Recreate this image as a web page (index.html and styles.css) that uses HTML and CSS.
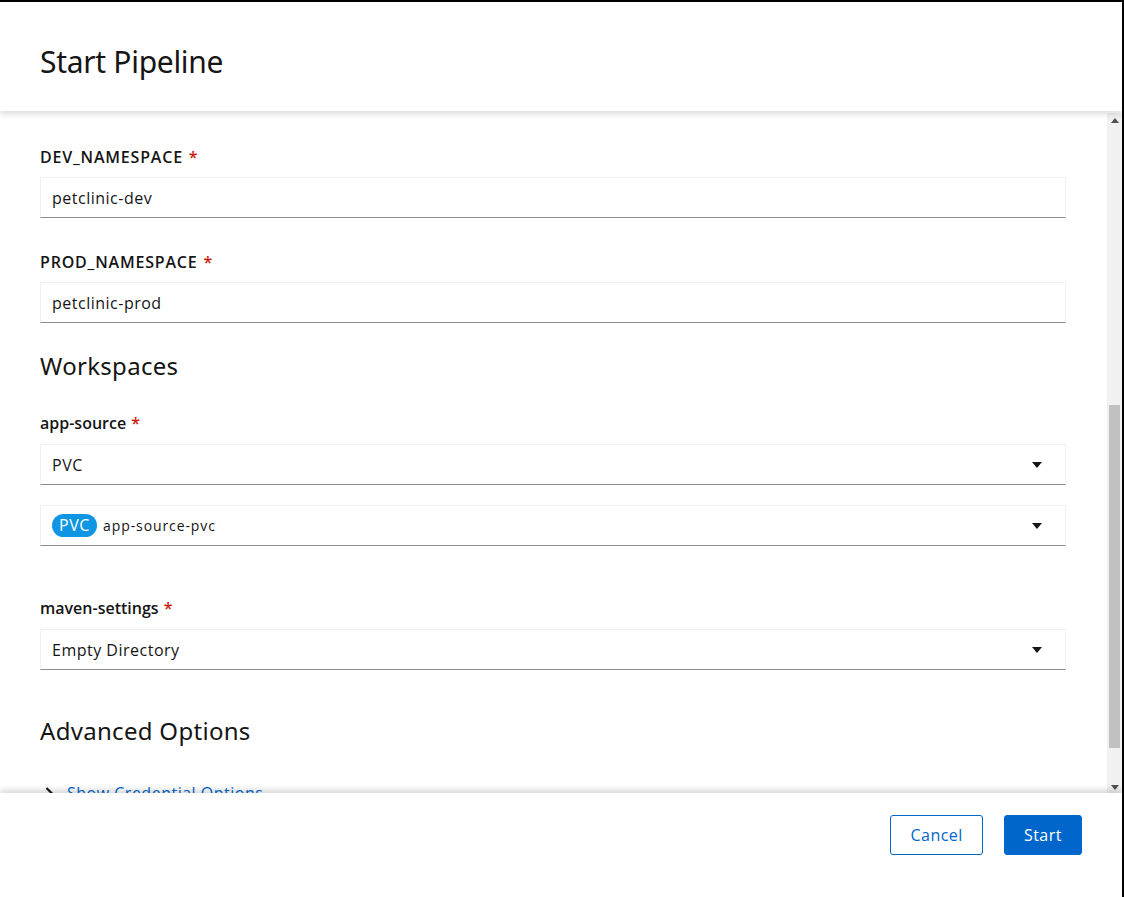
FILE: index.html
```html
<!DOCTYPE html>
<html>
<head>
<meta charset="utf-8">
<link rel="stylesheet" href="styles.css">
</head>
<body>
<div class="modal">
  <header class="modal-header">
    <h1 class="title">Start Pipeline</h1>
  </header>
  <div class="modal-body">
    <div class="content">
      <label class="label caps">DEV_NAMESPACE <span class="req">*</span></label>
      <div class="input">petclinic-dev</div>
      <label class="label caps l-prod">PROD_NAMESPACE <span class="req">*</span></label>
      <div class="input">petclinic-prod</div>
      <h2 class="section ws">Workspaces</h2>
      <label class="label">app-source <span class="req">*</span></label>
      <div class="input select"><span>PVC</span><svg class="caret" width="10" height="6" viewBox="0 0 10 6"><path d="M0 0H10L5 6Z"/></svg></div>
      <div class="input select second"><span class="res"><span class="badge">PVC</span><span class="res-name">app-source-pvc</span></span><svg class="caret" width="10" height="6" viewBox="0 0 10 6"><path d="M0 0H10L5 6Z"/></svg></div>
      <label class="label l-maven">maven-settings <span class="req">*</span></label>
      <div class="input select"><span>Empty Directory</span><svg class="caret" width="10" height="6" viewBox="0 0 10 6"><path d="M0 0H10L5 6Z"/></svg></div>
      <h2 class="section adv">Advanced Options</h2>
      <div class="toggle">
        <svg class="chev" width="8" height="12" viewBox="0 0 8 12"><path d="M1.5 1L6.5 6L1.5 11" fill="none" stroke="#151515" stroke-width="2.2"/></svg>
        <a class="link">Show Credential Options</a>
      </div>
    </div>
    <div class="scrollbar">
      <div class="sb-arrow"><svg width="8" height="5" viewBox="0 0 8 5"><path d="M0 5H8L4 0Z" fill="#505050"/></svg></div>
      <div class="sb-track"><div class="sb-thumb"></div></div>
      <div class="sb-arrow"><svg width="8" height="5" viewBox="0 0 8 5"><path d="M0 0H8L4 5Z" fill="#505050"/></svg></div>
    </div>
  </div>
  <footer class="modal-footer">
    <button class="btn secondary">Cancel</button>
    <button class="btn primary">Start</button>
  </footer>
</div>
</body>
</html>
```
FILE: styles.css
```css
* { box-sizing: border-box; }
html, body { margin: 0; padding: 0; }
body {
  background: #fff;
  font-family: "Open Sans", "Noto Sans", "Liberation Sans", sans-serif;
  color: #151515;
}
.modal {
  width: 1124px;
  height: 897px;
  border-top: 2px solid #000;
  border-right: 2px solid #000;
  display: flex;
  flex-direction: column;
  overflow: hidden;
}
.modal-header {
  height: 109px;
  flex: none;
  display: flex;
  align-items: center;
  padding: 10px 40px 0;
  position: relative;
  z-index: 2;
  background: #fff;
  box-shadow: 0 3px 6px rgba(0,0,0,0.14);
}
.title {
  margin: 0;
  font-family: "Noto Sans", "Open Sans", sans-serif;
  font-weight: 400;
  font-size: 30px;
  letter-spacing: -0.3px;
  color: #151515;
}
.modal-body {
  height: 682px;
  flex: none;
  display: flex;
  position: relative;
  z-index: 1;
}
.content {
  flex: 1;
  padding: 35px 41px 0 40px;
  overflow: hidden;
  display: flex;
  flex-direction: column;
}
.label {
  font-size: 16px;
  font-weight: 600;
  line-height: 22px;
  margin-bottom: 10px;
  color: #151515;
}
.label.caps { letter-spacing: 0.8px; margin-bottom: 9px; }
.l-prod { margin-top: 33px; }
.l-maven { margin-top: 51px; }
.req { color: #c9190b; font-weight: 600; margin-left: 1px; letter-spacing: 0; }
.input {
  height: 41px;
  flex: none;
  border: 1px solid #f0f0f0;
  border-bottom-color: #8a8d90;
  padding: 0 11px;
  display: flex;
  align-items: center;
  font-size: 16px;
  letter-spacing: 0.5px;
  color: #151515;
}
.select { justify-content: space-between; padding-right: 23px; }
.second { margin-top: 20px; }
.caret { fill: #151515; }
.res { display: flex; align-items: center; }
.badge {
  background: #0e96e4;
  color: #fff;
  border-radius: 12px;
  font-size: 16px;
  line-height: 23px;
  padding: 0 7px;
  letter-spacing: 0.6px;
  margin-right: 6px;
}
.res-name { font-size: 14px; letter-spacing: 0.9px; }
.section {
  margin: 0;
  font-weight: 400;
  font-size: 24px;
  letter-spacing: 0.3px;
  line-height: 30px;
  font-family: "Noto Sans", "Open Sans", sans-serif;
}
.ws { margin-top: 28px; margin-bottom: 31px; }
.adv { margin-top: 46px; margin-bottom: 35px; }
.toggle {
  display: flex;
  align-items: center;
  gap: 14px;
  padding-left: 5px;
  font-size: 16px;
  line-height: 24px;
  letter-spacing: 0.5px;
}
.link { color: #0066cc; }
.scrollbar {
  width: 15px;
  flex: none;
  background: #f1f1f1;
  display: flex;
  flex-direction: column;
  margin-top: 2px;
}
.sb-arrow {
  height: 15px;
  flex: none;
  display: flex;
  align-items: center;
  justify-content: center;
}
.sb-track { flex: 1; padding: 277px 2px 32px 2px; }
.sb-thumb { height: 343px; background: #c1c1c1; }
.modal-footer {
  flex: 1;
  position: relative;
  z-index: 3;
  background: #fff;
  box-shadow: 0 -3px 6px rgba(0,0,0,0.16);
  display: flex;
  justify-content: flex-end;
  align-items: flex-start;
  gap: 21px;
  padding: 22px 40px 0 0;
}
.btn {
  height: 40px;
  font-family: "Open Sans", "Noto Sans", sans-serif;
  font-size: 16px;
  letter-spacing: 0.5px;
  border-radius: 3px;
  padding: 0 19px;
  cursor: pointer;
}
.secondary {
  background: #fff;
  color: #0066cc;
  border: 1px solid #0066cc;
}
.primary {
  background: #0066cc;
  color: #fff;
  border: 1px solid #0066cc;
}
```
